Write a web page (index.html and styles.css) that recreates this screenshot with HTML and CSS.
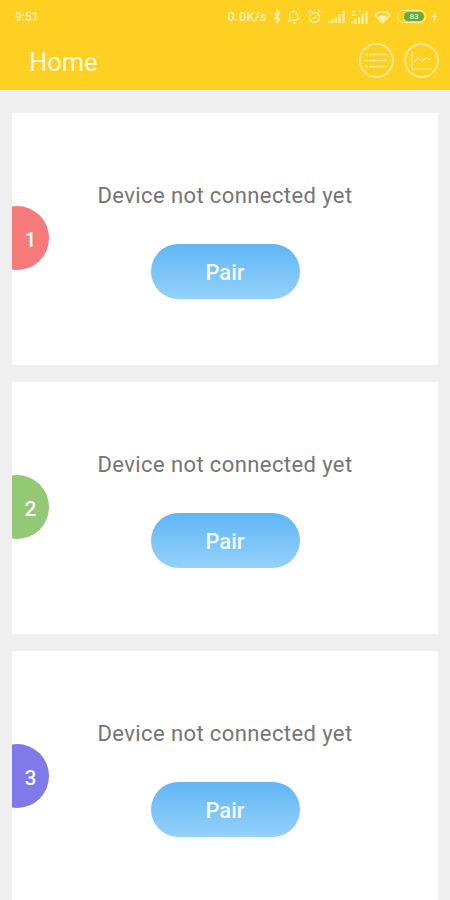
FILE: index.html
```html
<!DOCTYPE html>
<html lang="en">
<head>
    <meta charset="UTF-8">
    <meta name="viewport" content="width=device-width, initial-scale=1.0">
    <title>Home</title>
    <link rel="stylesheet" href="styles.css">
</head>
<body>
    <header class="header">
        <div class="statusbar">
            <span class="time">9:51</span>
            <div class="status-right">
                <span class="speed">0.0K/s</span>
                <svg class="st-icon" width="8" height="15" viewBox="0 0 8 15"><path d="M1 4.500l5.500 5.500-2.500 3.500V1.500l2.500 3.500L1 10.500" fill="none" stroke="currentColor" stroke-width="1.300"/></svg>
                <svg class="st-icon" width="14" height="14" viewBox="0 0 14 14"><path d="M1 11.500l11-2.500M3 11l-.5-5a4 4 0 0 1 4-4.500l1.500 0a3 3 0 0 1 2 2.500l1.500 5M6 13h3" fill="none" stroke="currentColor" stroke-width="1.300"/></svg>
                <svg class="st-icon" width="15" height="15" viewBox="0 0 15 15"><circle cx="7.500" cy="8.500" r="5" fill="none" stroke="currentColor" stroke-width="1.300"/><path d="M1 3.500l3-2.500M14 3.500l-3-2.500M5.500 9h4" fill="none" stroke="currentColor" stroke-width="1.300"/></svg>
                <svg class="st-icon" width="17" height="13" viewBox="0 0 17 13"><path d="M1 11v2M4.500 9v4M8 7v6M11.500 4v9M15.500 1v12" fill="none" stroke="currentColor" stroke-width="2.200"/></svg>
                <svg class="st-icon" width="17" height="15" viewBox="0 0 17 15"><path d="M1 12v3M4.500 10v5M8 8v7M11.500 5v10M15.500 2v13" fill="none" stroke="currentColor" stroke-width="2.200"/><path d="M1 2.500h4M1 6h4M7 1.500h3" stroke="currentColor" stroke-width="1.300"/></svg>
                <svg class="st-icon" width="17" height="14" viewBox="0 0 17 14"><path d="M8.500 13L.8 5a11 11 0 0 1 15.400 0z" fill="none" stroke="currentColor" stroke-width="1.300"/><path d="M8.500 12L4 7a7 7 0 0 1 9 0z" fill="currentColor"/></svg>
                <div class="battery"><div class="battery-fill">83</div></div>
                <svg class="st-icon" width="5" height="11" viewBox="0 0 6 11"><path d="M4 0L0 6h2.500L2 11l4-6.500H3.500z" fill="currentColor"/></svg>
            </div>
        </div>
        <div class="toolbar">
            <span class="title">Home</span>
            <div class="actions">
                <button class="round-btn">
                    <svg width="23" height="15" viewBox="0 0 23 15"><path d="M4 1.500h18M4 7.500h18M4 13.500h18" fill="none" stroke="currentColor" stroke-width="1.400"/><path d="M0 1.500h2.500M0 7.500h2.500M0 13.500h2.500" fill="none" stroke="currentColor" stroke-width="2"/></svg>
                </button>
                <button class="round-btn">
                    <svg width="22" height="20" viewBox="0 0 22 20"><path d="M1 1v17h20" fill="none" stroke="currentColor" stroke-width="1.200"/><path d="M3 11l4-4 4 3 4-3 5 2" fill="none" stroke="currentColor" stroke-width="1.200"/></svg>
                </button>
            </div>
        </div>
    </header>

    <main class="list">
        <section class="card">
            <div class="badge badge-red">1</div>
            <p class="message">Device not connected yet</p>
            <button class="pair">Pair</button>
        </section>
        <section class="card">
            <div class="badge badge-green">2</div>
            <p class="message">Device not connected yet</p>
            <button class="pair">Pair</button>
        </section>
        <section class="card">
            <div class="badge badge-purple">3</div>
            <p class="message">Device not connected yet</p>
            <button class="pair">Pair</button>
        </section>
    </main>
</body>
</html>
```

FILE: styles.css
```css
html, body {
    height: 100%;
}
body {
    margin: 0;
    height: 900px;
    overflow: hidden;
    background: #efefef;
    font-family: Roboto, "Noto Sans", sans-serif;
}
.header {
    height: 90px;
    background: #fed022;
    color: #fff0b0;
    box-sizing: border-box;
}
.statusbar {
    height: 33px;
    display: flex;
    align-items: center;
    justify-content: space-between;
    padding: 0 13px 0 15px;
    font-size: 12px;
    font-weight: 500;
}
.status-right {
    display: flex;
    align-items: center;
    gap: 6px;
}
.speed {
    font-size: 13px;
    letter-spacing: 0.2px;
}
.st-icon {
    display: block;
}
.battery {
    width: 29px;
    height: 13px;
    border: 1px solid #fff0b0;
    border-radius: 7px;
    box-sizing: border-box;
    padding: 1px;
}
.battery-fill {
    width: 20px;
    height: 9px;
    margin-left: 5px;
    border-radius: 5px;
    background: #63ad3e;
    color: #e6f3c0;
    font-size: 8px;
    line-height: 9px;
    text-align: center;
}
.toolbar {
    height: 57px;
    display: flex;
    align-items: center;
    justify-content: space-between;
    padding: 0 11px 0 29px;
    box-sizing: border-box;
}
.title {
    font-size: 25.500px;
    color: #fff8dc;
}
.actions {
    display: flex;
    gap: 10px;
    position: relative;
    top: -1px;
}
.round-btn {
    width: 35px;
    height: 35px;
    padding: 0;
    border: 2px solid #ffe88e;
    border-radius: 50%;
    background: none;
    color: #ffe88e;
    display: flex;
    align-items: center;
    justify-content: center;
}
.list {
    display: flex;
    flex-direction: column;
    gap: 17px;
    padding: 23px 12px 0;
}
.card {
    position: relative;
    height: 252px;
    flex: none;
    background: #fff;
    overflow: hidden;
    display: flex;
    flex-direction: column;
    align-items: center;
}
.message {
    margin: 70px 0 0;
    height: 26px;
    line-height: 26px;
    font-size: 22px;
    letter-spacing: 0.4px;
    color: #757575;
}
.pair {
    margin-top: 35px;
    width: 149px;
    height: 55px;
    padding: 2px 0 0;
    border: none;
    border-radius: 28px;
    background: linear-gradient(180deg, #5fb6f4 0%, #95d1fb 100%);
    color: #f4faff;
    font-family: inherit;
    font-size: 22px;
    font-weight: 500;
}
.badge {
    position: absolute;
    left: -27px;
    top: 93px;
    width: 64px;
    height: 64px;
    border-radius: 50%;
    box-sizing: border-box;
    padding: 3px 0 0 27px;
    display: flex;
    align-items: center;
    justify-content: center;
    color: #f8f8f8;
    font-size: 21px;
    font-weight: 500;
}
.badge-red {
    background: #f67a7a;
}
.badge-green {
    background: #93c875;
}
.badge-purple {
    background: #7f79ea;
}
```
